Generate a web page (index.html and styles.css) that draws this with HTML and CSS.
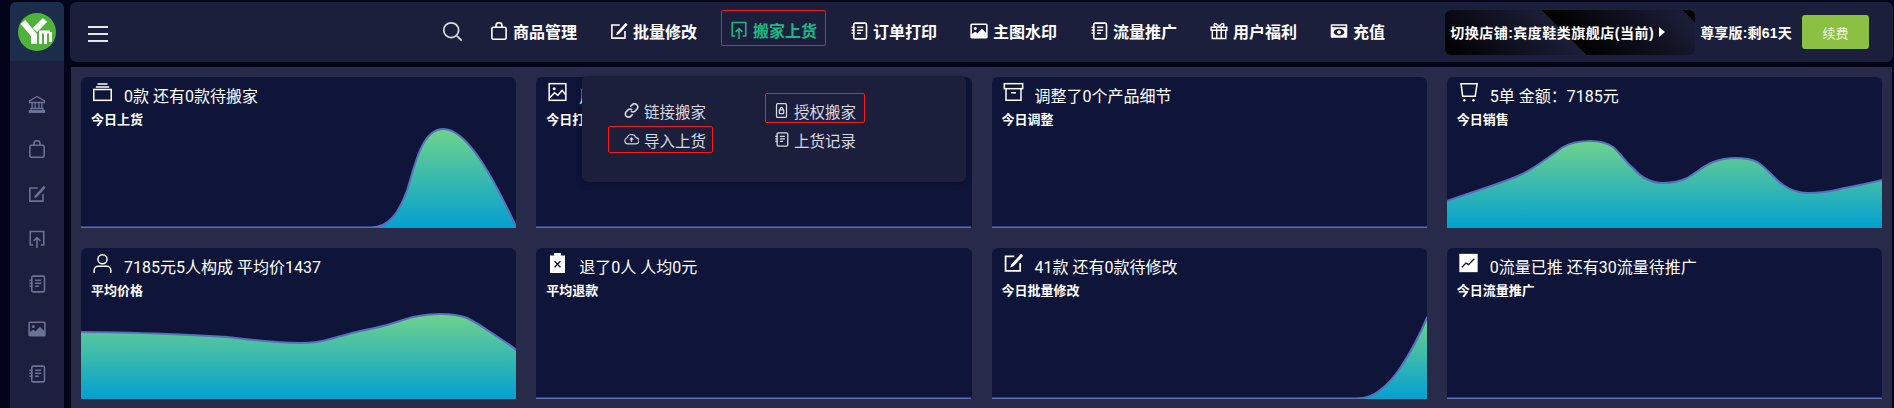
FILE: index.html
```html
<!DOCTYPE html>
<html lang="zh-CN">
<head>
    <meta charset="UTF-8">
    <title>店铺概览</title>
    <link rel="stylesheet" href="styles.css">
</head>
<body>
    <!-- icon sprite -->
    <svg class="sprite" xmlns="http://www.w3.org/2000/svg">
        <defs>
            <linearGradient id="area-fill" x1="0" y1="0" x2="0" y2="1">
                <stop offset="0" stop-color="#6fd28c"/>
                <stop offset="1" stop-color="#04a0d0"/>
            </linearGradient>
        </defs>
        <symbol id="i-search" viewBox="0 0 24 24"><circle cx="10.5" cy="10.5" r="8.5" fill="none" stroke="currentColor" stroke-width="2"/><path d="M17 17l5.500 5.500" stroke="currentColor" stroke-width="2" fill="none"/></symbol>
        <symbol id="i-bag" viewBox="0 0 24 24"><g fill="none" stroke="currentColor" stroke-width="2.100"><rect x="2.500" y="7" width="19" height="16" rx="2"/><path d="M8 7V5a4 4 0 0 1 8 0v2"/></g></symbol>
        <symbol id="i-edit" viewBox="0 0 24 24"><path d="M20 12v9.500H2.500V4H13" fill="none" stroke="currentColor" stroke-width="2.100"/><path d="M21 1l2.500 2.500L12 16l-4 1.500L9.500 13.500z" fill="currentColor"/></symbol>
        <symbol id="i-upload" viewBox="0 0 24 24"><g fill="none" stroke="currentColor" stroke-width="2.100"><path d="M7 20H3V2h18v18h-4"/><path d="M12 24V10M7.500 14.500L12 10l4.500 4.500"/></g></symbol>
        <symbol id="i-note" viewBox="0 0 24 24"><g fill="none" stroke="currentColor" stroke-width="2.100"><rect x="5" y="1.500" width="17" height="21" rx="2"/><path d="M9.500 7h8M9.500 11h8M9.500 15h5M2 7h4M2 11h4M2 15h4"/></g></symbol>
        <symbol id="i-image" viewBox="0 0 24 24"><rect x="1.500" y="3" width="21" height="18" rx="1" fill="none" stroke="currentColor" stroke-width="2.100"/><circle cx="7" cy="8.500" r="2" fill="currentColor"/><path d="M2 20v-4l5-3 3 2 6-6 6 6v5z" fill="currentColor"/></symbol>
        <symbol id="i-gift" viewBox="0 0 24 24"><g fill="none" stroke="currentColor" stroke-width="1.900"><path d="M3 11v11h18V11M1.500 7h21v4h-21zM9 7v15M15 7v15M12 7C10 2 6 1 5.500 3.500S8 7 12 7zM12 7c2-5 6-6 6.500-3.500S16 7 12 7z"/></g></symbol>
        <symbol id="i-cash" viewBox="0 0 24 24"><path d="M2 3h20a1 1 0 0 1 1 1v16a1 1 0 0 1-1 1H2a1 1 0 0 1-1-1V4a1 1 0 0 1 1-1zM3 5v2h18V5z" fill="currentColor" fill-rule="evenodd"/><ellipse cx="12" cy="13.500" rx="7" ry="4.500" fill="#1b1f3c"/><circle cx="12" cy="13.500" r="2.500" fill="currentColor"/></symbol>
        <symbol id="i-bank" viewBox="0 0 24 24"><g fill="none" stroke="currentColor" stroke-width="1.800"><path d="M12 2L2 8v2h20V8zM2 21h20v2H2zM4 18h16v3H4zM5.500 10v8M9.500 10v8M14.500 10v8M18.500 10v8"/></g></symbol>
        <symbol id="i-link" viewBox="0 0 24 24"><g fill="none" stroke="currentColor" stroke-width="2.600"><path d="M10 6l3-3a5 5 0 0 1 7.500 7l-3 3a5 5 0 0 1-6.500 0"/><path d="M14 18l-3 3a5 5 0 0 1-7.500-7l3-3a5 5 0 0 1 6.500 0"/></g></symbol>
        <symbol id="i-lock" viewBox="0 0 24 24"><g fill="none" stroke="currentColor" stroke-width="2"><rect x="4" y="1" width="16" height="22" rx="2"/><rect x="8.500" y="11" width="7" height="6" rx="1"/><path d="M10 11V9a2 2 0 0 1 4 0v2"/></g></symbol>
        <symbol id="i-cloud" viewBox="0 0 24 24"><path d="M6 19a5 5 0 0 1-1-9.800A7.500 7.500 0 0 1 19.200 9 5 5 0 0 1 18.500 19z" fill="none" stroke="currentColor" stroke-width="1.800"/><path d="M12 8l4 4.500h-3V16h-2v-3.500H8z" fill="currentColor"/></symbol>
        <symbol id="i-stack" viewBox="0 0 24 24"><g fill="none" stroke="currentColor" stroke-width="1.800"><rect x="1.500" y="9" width="21" height="13"/><path d="M4 6h16M6 2.500h12"/></g></symbol>
        <symbol id="i-pic" viewBox="0 0 24 24"><g fill="none" stroke="currentColor" stroke-width="1.800"><rect x="2" y="2" width="20" height="20"/><path d="M2.500 19l6-6 4 3 5-6 4 5"/></g><circle cx="8" cy="8" r="1.800" fill="currentColor"/></symbol>
        <symbol id="i-box" viewBox="0 0 24 24"><g fill="none" stroke="currentColor" stroke-width="1.800"><rect x="1" y="2" width="22" height="6"/><path d="M3 8v14h18V8M9 13h6"/></g></symbol>
        <symbol id="i-cart" viewBox="0 0 24 24"><g fill="none" stroke="currentColor" stroke-width="1.800"><path d="M2 2h21M22.500 1L20 17H5L3 2"/></g><circle cx="7" cy="22" r="1.500" fill="currentColor"/><circle cx="18" cy="22" r="1.500" fill="currentColor"/></symbol>
        <symbol id="i-user" viewBox="0 0 24 24"><g fill="none" stroke="currentColor" stroke-width="1.800"><circle cx="12" cy="7.500" r="5.500"/><path d="M2 24v-3a5 5 0 0 1 5-5h10a5 5 0 0 1 5 5v3"/></g></symbol>
        <symbol id="i-clip" viewBox="0 0 24 24"><path d="M3 3h5V0h8v3h5v22H3z" fill="currentColor"/><path d="M8.500 10l7 7M15.500 10l-7 7" stroke="#0f1539" stroke-width="1.600"/></symbol>
        <symbol id="i-trend" viewBox="0 0 24 24"><rect x="1" y="1" width="22" height="22" fill="currentColor"/><path d="M4 17l5-5 3 2 7-7" fill="none" stroke="#0f1539" stroke-width="1.600"/></symbol>
    </svg>

    <aside class="sidebar">
        <div class="logo-box">
            <svg class="logo" viewBox="0 0 38 38">
                <circle cx="19" cy="19" r="19" fill="#4fb33b"/>
                <path d="M5 9l11 13v9M27 7L17 17" fill="none" stroke="#fff" stroke-width="6"/>
                <path d="M22.500 31V18M27.500 31V19M32.500 29V19M21 19h11" fill="none" stroke="#fff" stroke-width="3"/>
            </svg>
        </div>
        <ul class="side-menu">
            <li><svg class="side-icon"><use href="#i-bank"/></svg></li>
            <li><svg class="side-icon"><use href="#i-bag"/></svg></li>
            <li><svg class="side-icon"><use href="#i-edit"/></svg></li>
            <li><svg class="side-icon"><use href="#i-upload"/></svg></li>
            <li><svg class="side-icon"><use href="#i-note"/></svg></li>
            <li><svg class="side-icon"><use href="#i-image"/></svg></li>
            <li><svg class="side-icon"><use href="#i-note"/></svg></li>
        </ul>
    </aside>

    <div class="content">
        <header class="topbar">
            <div class="burger"><span></span><span></span><span></span></div>
            <svg class="search-icon"><use href="#i-search"/></svg>
            <nav class="nav">
                <a class="nav-item"><svg class="nav-icon"><use href="#i-bag"/></svg>商品管理</a>
                <a class="nav-item"><svg class="nav-icon"><use href="#i-edit"/></svg>批量修改</a>
                <a class="nav-item active"><svg class="nav-icon"><use href="#i-upload"/></svg>搬家上货</a>
                <a class="nav-item"><svg class="nav-icon"><use href="#i-note"/></svg>订单打印</a>
                <a class="nav-item"><svg class="nav-icon"><use href="#i-image"/></svg>主图水印</a>
                <a class="nav-item"><svg class="nav-icon"><use href="#i-note"/></svg>流量推广</a>
                <a class="nav-item"><svg class="nav-icon"><use href="#i-gift"/></svg>用户福利</a>
                <a class="nav-item"><svg class="nav-icon"><use href="#i-cash"/></svg>充值</a>
            </nav>
            <div class="store-switch">切换店铺:宾度鞋类旗舰店(当前)<span class="store-arrow"></span></div>
            <div class="plan">尊享版:剩61天</div>
            <button class="renew-btn">续费</button>
        </header>

        <main class="main">
            <div class="card-grid">
                <section class="card">
                    <div class="card-head">
                        <div class="card-title"><svg class="card-icon"><use href="#i-stack"/></svg>0款 还有0款待搬家</div>
                        <div class="card-sub">今日上货</div>
                    </div>
                    <svg class="chart" viewBox="0 0 435 100" preserveAspectRatio="none">
                        <path class="area" d="M0 99H290C308 99 318 84 326 62C333 40 340 1 362 1C385 1 410 45 435 99V100H0Z"/>
                        <path class="line" d="M0 99.500H290C308 99.500 318 84 326 62C333 40 340 1 362 1C385 1 410 45 435 99"/>
                    </svg>
                </section>

                <section class="card">
                    <div class="card-head">
                        <div class="card-title"><svg class="card-icon"><use href="#i-pic"/></svg>用了0张水印</div>
                        <div class="card-sub">今日打水印</div>
                    </div>
                    <svg class="chart" viewBox="0 0 435 100" preserveAspectRatio="none">
                        <path class="line" d="M0 99.500H435"/>
                    </svg>
                </section>

                <section class="card">
                    <div class="card-head">
                        <div class="card-title"><svg class="card-icon"><use href="#i-box"/></svg>调整了0个产品细节</div>
                        <div class="card-sub">今日调整</div>
                    </div>
                    <svg class="chart" viewBox="0 0 435 100" preserveAspectRatio="none">
                        <path class="line" d="M0 99.500H435"/>
                    </svg>
                </section>

                <section class="card">
                    <div class="card-head">
                        <div class="card-title"><svg class="card-icon"><use href="#i-cart"/></svg>5单 金额：7185元</div>
                        <div class="card-sub">今日销售</div>
                    </div>
                    <svg class="chart" viewBox="0 0 435 100" preserveAspectRatio="none">
                        <path class="area" d="M0 73C25 64 50 57 73 47C85 42 95 34 116 19C125 14 135 13 143 13C152 13 160 15 166 19C175 27 180 36 186 40C195 51 205 55 216 55C228 55 234 53 240 50C250 44 256 38 266 34C274 31 280 30 288 30C296 30 304 31 310 34C320 40 328 52 336 57C345 63 352 65 360 65C372 65 382 64 393 61C408 58 420 56 435 52V100H0Z"/>
                        <path class="line" d="M0 73C25 64 50 57 73 47C85 42 95 34 116 19C125 14 135 13 143 13C152 13 160 15 166 19C175 27 180 36 186 40C195 51 205 55 216 55C228 55 234 53 240 50C250 44 256 38 266 34C274 31 280 30 288 30C296 30 304 31 310 34C320 40 328 52 336 57C345 63 352 65 360 65C372 65 382 64 393 61C408 58 420 56 435 52"/>
                    </svg>
                </section>

                <section class="card">
                    <div class="card-head">
                        <div class="card-title"><svg class="card-icon"><use href="#i-user"/></svg>7185元5人构成 平均价1437</div>
                        <div class="card-sub">平均价格</div>
                    </div>
                    <svg class="chart" viewBox="0 0 435 100" preserveAspectRatio="none">
                        <path class="area" d="M0 33C30 33 60 34 86 35C110 36 128 37 146 38C170 41 195 44 219 44C232 44 240 43 249 40C260 37 270 34 279 32C290 30 298 28 306 26C316 23 324 20 332 18C342 16 350 15 359 15C370 15 378 16 386 19C394 23 402 28 409 33C418 39 428 45 435 51V100H0Z"/>
                        <path class="line" d="M0 33C30 33 60 34 86 35C110 36 128 37 146 38C170 41 195 44 219 44C232 44 240 43 249 40C260 37 270 34 279 32C290 30 298 28 306 26C316 23 324 20 332 18C342 16 350 15 359 15C370 15 378 16 386 19C394 23 402 28 409 33C418 39 428 45 435 51"/>
                    </svg>
                </section>

                <section class="card">
                    <div class="card-head">
                        <div class="card-title"><svg class="card-icon"><use href="#i-clip"/></svg>退了0人 人均0元</div>
                        <div class="card-sub">平均退款</div>
                    </div>
                    <svg class="chart" viewBox="0 0 435 100" preserveAspectRatio="none">
                        <path class="line" d="M0 99.500H435"/>
                    </svg>
                </section>

                <section class="card">
                    <div class="card-head">
                        <div class="card-title"><svg class="card-icon"><use href="#i-edit"/></svg>41款 还有0款待修改</div>
                        <div class="card-sub">今日批量修改</div>
                    </div>
                    <svg class="chart" viewBox="0 0 435 100" preserveAspectRatio="none">
                        <path class="area" d="M365 99C375 99 382 96 388 91C396 85 402 78 408 69C418 54 428 35 435 18V100H365Z"/>
                        <path class="line" d="M0 99.500H365C375 99.500 382 96 388 91C396 85 402 78 408 69C418 54 428 35 435 18"/>
                    </svg>
                </section>

                <section class="card">
                    <div class="card-head">
                        <div class="card-title"><svg class="card-icon"><use href="#i-trend"/></svg>0流量已推 还有30流量待推广</div>
                        <div class="card-sub">今日流量推广</div>
                    </div>
                    <svg class="chart" viewBox="0 0 435 100" preserveAspectRatio="none">
                        <path class="line" d="M0 99.500H435"/>
                    </svg>
                </section>
            </div>
        </main>

        <!-- dropdown of the active nav item -->
        <div class="dropdown">
            <a class="drop-item first"><svg class="drop-icon"><use href="#i-link"/></svg>链接搬家</a>
            <a class="drop-item first marked"><svg class="drop-icon"><use href="#i-lock"/></svg>授权搬家</a>
            <a class="drop-item marked"><svg class="drop-icon"><use href="#i-cloud"/></svg>导入上货</a>
            <a class="drop-item"><svg class="drop-icon"><use href="#i-note"/></svg>上货记录</a>
        </div>
    </div>
</body>
</html>
```

FILE: styles.css
```css
:root {
    --page-dark: #03031a;
    --panel: #1b1f3c;
    --main-bg: #272a48;
    --card-bg: #0f1539;
    --green: #1ab98a;
    --red: #f41c1c;
}

* {
    margin: 0;
    padding: 0;
    box-sizing: border-box;
}

html,
body {
    height: 408px;
    overflow: hidden;
}

body {
    display: flex;
    background-color: var(--page-dark);
    color: #fff;
    font-family: "Liberation Sans", "Noto Sans CJK SC", sans-serif;
}

.sprite {
    position: absolute;
    width: 0;
    height: 0;
}

/* sidebar */
.sidebar {
    flex: 0 0 54px;
    margin: 2px 6px 0 10px;
    background-color: #1c1f3d;
    border-radius: 6px 6px 0 0;
    overflow: hidden;
}

.logo-box {
    display: flex;
    justify-content: center;
    align-items: center;
    height: 59px;
    background-color: #1b2d4b;
}

.logo {
    width: 38px;
    height: 38px;
}

.side-menu {
    list-style: none;
    padding-top: 20px;
}

.side-menu li {
    display: flex;
    justify-content: center;
    align-items: center;
    height: 45px;
}

.side-icon {
    width: 18px;
    height: 18px;
    color: #6c7196;
}

/* top bar */
.content {
    position: relative;
    flex: 1;
    min-width: 0;
    padding-top: 2px;
}

.topbar {
    display: flex;
    align-items: center;
    height: 60px;
    margin-right: 1px;
    padding-right: 24px;
    background-color: var(--panel);
    border-radius: 6px;
}

.burger {
    display: flex;
    flex-direction: column;
    gap: 5px;
    width: 20px;
    margin-left: 18px;
    margin-top: 4px;
}

.burger span {
    height: 2px;
    background-color: #e4e6f0;
}

.search-icon {
    width: 21px;
    height: 21px;
    margin: 0 0 2px 334px;
    color: #d8dae4;
}

.nav {
    display: flex;
    align-items: center;
    gap: 33px;
    margin-left: 27px;
    margin-bottom: 2px;
}

.nav-item {
    display: flex;
    align-items: center;
    gap: 5px;
    font-size: 16px;
    font-weight: bold;
    white-space: nowrap;
}

.nav-item.active {
    height: 36px;
    margin: 0 -9px 6px;
    padding: 4px 8px 0;
    border: 1px solid var(--red);
    border-radius: 2px;
    color: var(--green);
}

.nav-icon {
    width: 18px;
    height: 18px;
}

.store-switch {
    display: flex;
    align-items: center;
    flex: 0 0 250px;
    height: 45px;
    margin-left: auto;
    padding-left: 5px;
    border-radius: 6px;
    background-image: repeating-linear-gradient(45deg, #000 0, #1b1e38 100px);
    font-size: 14px;
    font-weight: bold;
    letter-spacing: 0.5px;
    white-space: nowrap;
}

.store-arrow {
    width: 0;
    height: 0;
    margin-left: 5px;
    border-left: 6px solid #fff;
    border-top: 5px solid transparent;
    border-bottom: 5px solid transparent;
}

.plan {
    margin-left: 5px;
    font-size: 14px;
    font-weight: bold;
    letter-spacing: 0.2px;
    white-space: nowrap;
}

.renew-btn {
    flex: 0 0 67px;
    height: 34px;
    margin-left: 10px;
    border: none;
    border-radius: 3px;
    background-color: #8bc043;
    color: #eef5e0;
    font-family: inherit;
    font-size: 13px;
}

/* cards */
.main {
    height: 341px;
    margin: 5px 2px 0 1px;
    padding: 10px;
    background-color: var(--main-bg);
}

.card-grid {
    display: grid;
    grid-template-columns: repeat(4, 1fr);
    grid-auto-rows: 151px;
    gap: 20px;
}

.card {
    display: flex;
    flex-direction: column;
    justify-content: space-between;
    background-color: var(--card-bg);
    border-radius: 6px 6px 0 0;
    overflow: hidden;
}

.card-head {
    height: 51px;
    padding: 6px 10px 0;
}

.card-title {
    display: flex;
    align-items: center;
    height: 24px;
    padding-left: 1px;
    font-family: Roboto, "Noto Sans CJK SC", sans-serif;
    font-size: 16px;
    white-space: nowrap;
}

.card-icon {
    flex: 0 0 21px;
    height: 20px;
    margin: -6px 11px 0 0;
}

.card-sub {
    margin-top: 4px;
    font-size: 13px;
    font-weight: bold;
    line-height: 18px;
}

.chart {
    display: block;
    flex: 0 0 100px;
    width: 100%;
    height: 100px;
}

.chart .area {
    fill: url(#area-fill);
}

.chart .line {
    fill: none;
    stroke: #5a6ec2;
    stroke-width: 2;
}

/* dropdown */
.dropdown {
    position: absolute;
    top: 76px;
    left: 512px;
    display: grid;
    grid-template-columns: 105px 100px;
    grid-template-rows: 30px 27px;
    gap: 3px 52px;
    align-content: start;
    width: 384px;
    height: 106px;
    padding: 17px 0 0 26px;
    background-color: var(--panel);
    border-radius: 6px;
    box-shadow: 0 2px 6px rgba(0, 0, 0, 0.25);
}

.drop-item {
    display: flex;
    align-items: center;
    justify-content: flex-end;
    gap: 5px;
    padding-right: 6px;
    border: 1px solid transparent;
    border-radius: 2px;
    color: #d8dae4;
    font-size: 15.5px;
    white-space: nowrap;
}

.drop-item:nth-child(even) {
    padding-right: 8px;
}

.drop-item.first {
    padding-top: 5px;
}

.drop-item.marked {
    border-color: var(--red);
}

.drop-icon {
    width: 15px;
    height: 15px;
}
```
